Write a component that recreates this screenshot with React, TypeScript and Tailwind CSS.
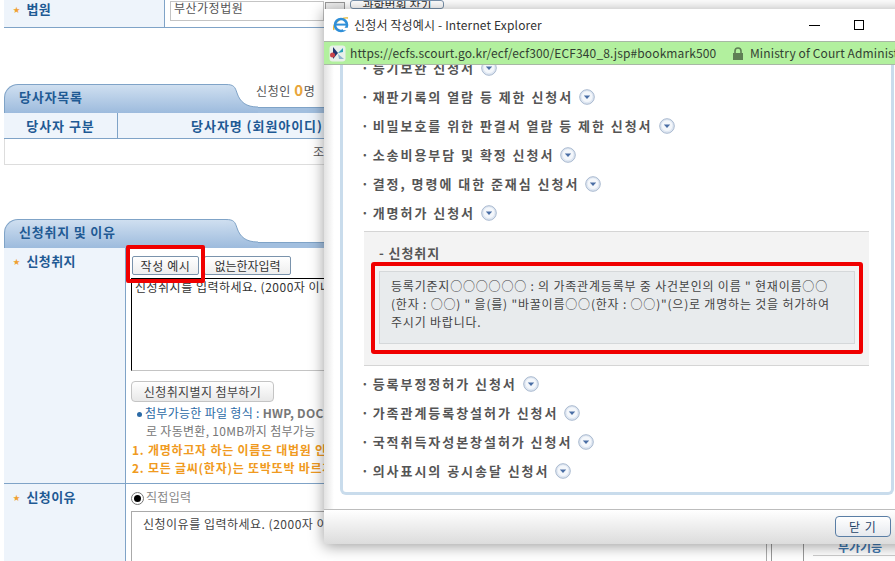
const FONT = "font-['Noto_Sans_CJK_KR','Noto_Sans',sans-serif]"

function Star() {
  return <span className="mr-[6px] inline-block align-[2px] text-[7px] leading-none text-[#f0a030]">★</span>
}

function SectionTab({ title, children }: { title: string; children?: React.ReactNode }) {
  return (
    <div className="flex h-[29px]">
      <div className="flex w-[222px] items-center rounded-tl-[14px] border-l border-t border-[#7fa3c7] bg-gradient-to-b from-[#cfdff0] to-[#9dbbdd] pb-[4px] pl-[14px] text-[13px] font-bold tracking-[0.8px] text-[#1f5a94]">
        {title}
      </div>
      <svg width="32" height="29" viewBox="0 0 32 29" className="shrink-0">
        <defs>
          <linearGradient id="tabfill" x1="0" y1="0" x2="0" y2="1">
            <stop offset="0" stopColor="#cfdff0" />
            <stop offset="1" stopColor="#9dbbdd" />
          </linearGradient>
        </defs>
        <path d="M0 0.5 C8 0.5 9 3 11 9 C14 18 20 23 32 23 L32 29 L0 29 Z" fill="url(#tabfill)" />
        <path d="M0 0.5 C8 0.5 9 3 11 9 C14 18 20 23 32 23" fill="none" stroke="#7fa3c7" />
      </svg>
      <div className="relative flex flex-1 flex-col justify-end">
        {children}
        <div className="h-[6px] border-t border-[#7fa3c7] bg-[#a2bfdf]" />
      </div>
    </div>
  )
}

function ExpandIcon() {
  return (
    <svg width="16" height="16" viewBox="0 0 16 16" className="ml-[6px] shrink-0">
      <circle cx="8" cy="8" r="7.3" fill="#dfe7f2" stroke="#a9b9cf" />
      <circle cx="8" cy="7.6" r="5.4" fill="#f4f7fb" />
      <path d="M4.8 6.6 H11.2 L8 10 Z" fill="#4a6ea5" />
    </svg>
  )
}

function FormItem({ label }: { label: string }) {
  return (
    <div className="flex h-[29px] items-center pl-[18px] text-[13px] font-bold tracking-[1.95px] text-[#555555]">
      <span className="mr-[4px] tracking-normal">·</span>
      <span>{label}</span>
      <ExpandIcon />
    </div>
  )
}

function IeIcon() {
  return (
    <svg width="18" height="18" viewBox="0 0 18 18" className="shrink-0">
      <path d="M2 14 C0 8 8 1 16 2" fill="none" stroke="#e8b93a" strokeWidth="1.4" />
      <circle cx="9" cy="9" r="6" fill="none" stroke="#2f8fd8" strokeWidth="2.6" />
      <path d="M4 8.6 H14" stroke="#2f8fd8" strokeWidth="2" />
      <path d="M11 13 H16" stroke="#ffffff" strokeWidth="2.4" />
    </svg>
  )
}

function SiteIcon() {
  return (
    <svg width="17" height="17" viewBox="0 0 17 17" className="shrink-0">
      <rect x="0.5" y="0.5" width="16" height="16" rx="3" fill="#e8f0ea" />
      <path d="M4 2 L9 8 L4 14 Z" fill="#20356f" />
      <circle cx="3.5" cy="10" r="2.5" fill="#c8434a" />
      <path d="M9 8 L14 3 L14 7 Z" fill="#2a9fb8" />
      <path d="M9 9 L15 14 L10 14 Z" fill="#8fb4cf" />
    </svg>
  )
}

function LockIcon() {
  return (
    <svg width="12" height="13" viewBox="0 0 12 13" className="shrink-0">
      <path d="M3 6 V4 a3 3 0 0 1 6 0 V6" fill="none" stroke="#5f7f55" strokeWidth="1.6" />
      <rect x="1" y="6" width="10" height="7" fill="#5f7f55" />
    </svg>
  )
}

const itemsAbove = [
  '등기보완 신청서',
  '재판기록의 열람 등 제한 신청서',
  '비밀보호를 위한 판결서 열람 등 제한 신청서',
  '소송비용부담 및 확정 신청서',
  '결정, 명령에 대한 준재심 신청서',
  '개명허가 신청서',
]

const itemsBelow = [
  '등록부정정허가 신청서',
  '가족관계등록창설허가 신청서',
  '국적취득자성본창설허가 신청서',
  '의사표시의 공시송달 신청서',
]

function Popup() {
  return (
    <div className="absolute left-[324px] top-[9px] flex h-[535px] w-[620px] flex-col bg-white shadow-[0_2px_14px_rgba(0,0,0,0.4)]">
      <div className="flex h-[32px] shrink-0 items-center pl-[8px]">
        <IeIcon />
        <span className="ml-[4px] text-[12px] tracking-[0.15px] text-[#333333]">신청서 작성예시 - Internet Explorer</span>
        <span className="ml-[267px] h-px w-[11px] bg-black" />
        <span className="ml-[34px] h-[10px] w-[10px] border border-black" />
      </div>
      <div className="flex h-[24px] shrink-0 items-center border-y border-[#a8b8a4] bg-[#b2f09e] pl-[5px] text-[12px] tracking-[0.12px] text-[#333f33]">
        <SiteIcon />
        <span className="ml-[4px] w-[382px] shrink-0">https://ecfs.scourt.go.kr/ecf/ecf300/ECF340_8.jsp#bookmark500</span>
        <LockIcon />
        <span className="ml-[6px] whitespace-nowrap">Ministry of Court Administration</span>
      </div>
      <div className="min-h-0 flex-1 bg-[linear-gradient(90deg,#e2e2e2,#ffffff_10px)] pl-[16px] pt-0">
        <div className="h-[430px] w-[554px] overflow-hidden rounded-b-[6px] border-x-[3px] border-b-[3px] border-[#c9dcec] bg-white">
          <div className="-mt-[12px]">
            {itemsAbove.map((item) => (
              <FormItem key={item} label={item} />
            ))}
            <div className="ml-[21px] mt-[4px] h-[135px] w-[505px] border-y border-[#d5d5d5] bg-[#f3f3f3] pl-[15px] pt-[11px]">
              <div className="text-[13px] font-bold tracking-[0.9px] text-[#555555]">- 신청취지</div>
              <div className="mt-[8px] h-[73px] w-[476px] border border-[#d5d8da] bg-[#e8ebed] pl-[11px] pt-[5px] text-[12px] leading-[18px] tracking-[0.8px] text-[#444444]">
                <div className="whitespace-nowrap">등록기준지○○○○○○ : 의 가족관계등록부 중 사건본인의 이름 " 현재이름○○</div>
                <div className="whitespace-nowrap">(한자 : ○○) " 을(를) "바꿀이름○○(한자 : ○○)"(으)로 개명하는 것을 허가하여</div>
                <div className="whitespace-nowrap">주시기 바랍니다.</div>
              </div>
            </div>
            <div className="mt-[3px]">
              {itemsBelow.map((item) => (
                <FormItem key={item} label={item} />
              ))}
            </div>
          </div>
        </div>
      </div>
      <div className="flex h-[35px] shrink-0 items-start border-t border-[#bdbdbd] bg-gradient-to-b from-white to-[#dcdcdc] pl-[511px] pt-[6px]">
        <button className="h-[21px] w-[56px] rounded-[4px] border border-[#5a7ea5] bg-gradient-to-b from-white to-[#e6e9ee] text-[12px] leading-none tracking-[1px] text-[#1f4468]">
          닫 기
        </button>
      </div>
    </div>
  )
}

const BTN =
  'h-[19px] rounded-[2px] border border-[#7a93ac] bg-gradient-to-b from-white to-[#eeeeee] text-[12px] leading-none text-[#333333]'

export default function App() {
  return (
    <div className={`${FONT} relative flex h-[561px] w-[895px] overflow-hidden bg-white pl-1`}>
      <div className="w-[768px] shrink-0">
        <div className="flex h-[28px] border-b border-[#7fa3c7]">
          <div className="w-[161px] border-r border-[#7fa3c7] bg-[#eef4fb] pl-[9px] pt-px text-[13px] font-bold leading-[16px] tracking-[0.4px] text-[#1f5a94]">
            <Star />
            법원
          </div>
          <div className="ml-[5px] mt-px h-[20px] w-[154px] border border-[#c4c4c4] pl-[3px] text-[12px] leading-[12px] tracking-[0.5px] text-[#555555]">
            부산가정법원
          </div>
          <div className="ml-px mt-[2px] h-[8px] w-[20px] border border-[#999999] bg-[#eeeeee]" />
          <div className="ml-[5px] mt-0 h-[9px] w-[94px] overflow-hidden rounded-[3px] border border-[#7a93ac] text-center text-[12px] leading-[9px] text-[#333333]">
            관할법원 찾기
          </div>
        </div>

        <div className="mt-[56px]">
          <SectionTab title="당사자목록">
            <div className="absolute left-[-2px] top-[-1px] whitespace-nowrap text-[12px] leading-[14px] tracking-[0.6px] text-[#555555]">
              신청인 <span className="text-[15px] font-bold text-[#e8a53a]">0</span>명
            </div>
          </SectionTab>
          <div className="flex h-[26px] border-b border-[#7fa3c7] bg-[#eef4fb] text-[13px] font-bold tracking-[0.95px] text-[#1f5a94]">
            <div className="flex w-[114px] items-center justify-center border-r border-[#7fa3c7]">당사자 구분</div>
            <div className="flex w-[278px] items-center justify-center">당사자명 (회원아이디)</div>
          </div>
          <div className="flex h-[26px] items-center border-x border-b border-[#dddddd] pl-[308px] text-[12px] text-[#555555]">
            조회된 당사자가 없습니다.
          </div>
        </div>

        <div className="mt-[54px]">
          <SectionTab title="신청취지 및 이유" />
          <div className="flex h-[236px] border-b border-[#7fa3c7]">
            <div className="w-[122px] shrink-0 border-r border-[#7fa3c7] bg-[#eef4fb] pl-[9px] pt-[3px] text-[13px] font-bold tracking-[0.4px] text-[#1f5a94]">
              <Star />
              신청취지
            </div>
            <div className="flex-1 pl-[5px] pt-[8px]">
              <div className="flex gap-[5px] pl-px">
                <button className={`${BTN} w-[67px] tracking-[0.6px]`}>작성 예시</button>
                <button className={`${BTN} w-[87px]`}>없는한자입력</button>
              </div>
              <div className="mt-[3px] h-[93px] w-[636px] border-x border-y border-black border-b-[#c4c4c4] pl-[3px] text-[12px] leading-[15px] tracking-[0.5px] text-[#333333]">
                신청취지를 입력하세요. (2000자 이내)
              </div>
              <button className="mt-[10px] h-[21px] w-[143px] rounded-[4px] border border-[#c4c4c4] bg-gradient-to-b from-white to-[#e8e8e8] text-[12px] leading-none tracking-[0.4px] text-[#444444]">
                신청취지별지 첨부하기
              </button>
              <div className="mt-[2px] whitespace-nowrap pl-[14px] text-[12px] leading-[18px] tracking-[0.3px] text-[#2b6aa6]">
                <span className="mr-[3px] inline-block h-[5px] w-[5px] -translate-x-[8px] rounded-full bg-[#2b6aa6] align-middle" />
                <span className="-ml-[8px]">첨부가능한 파일 형식 : </span>
                <span className="font-bold text-[#777777]">HWP, DOC, PDF</span>
              </div>
              <div className="whitespace-nowrap pl-[15px] text-[12px] leading-[18px] tracking-[0.3px] text-[#777777]">로 자동변환, 10MB까지 첨부가능</div>
              <div className="whitespace-nowrap pl-px text-[12px] font-bold leading-[19px] tracking-[0.75px] text-[#f09a20]">
                1. 개명하고자 하는 이름은 대법원 인명용 한자
              </div>
              <div className="whitespace-nowrap pl-px text-[12px] font-bold leading-[18px] tracking-[0.75px] text-[#f09a20]">
                2. 모든 글씨(한자)는 또박또박 바르게
              </div>
            </div>
          </div>
          <div className="flex h-[77px] border-r border-[#999999]">
            <div className="w-[122px] shrink-0 border-r border-[#7fa3c7] bg-[#eef4fb] pl-[9px] pt-[3px] text-[13px] font-bold tracking-[0.4px] text-[#1f5a94]">
              <Star />
              신청이유
            </div>
            <div className="flex-1 pl-[5px] pt-[3px]">
              <div className="flex h-[19px] items-center text-[12px] tracking-[0.3px] text-[#888888]">
                <span className="mr-[2px] mt-[3px] flex h-[13px] w-[13px] items-center justify-center rounded-full border border-[#777777]">
                  <span className="h-[7px] w-[7px] rounded-full bg-black" />
                </span>
                직접입력
              </div>
              <div className="mt-[5px] h-[60px] w-[636px] border border-[#aaaaaa] pl-[11px] pt-[3px] text-[12px] tracking-[0.5px] text-[#444444]">
                신청이유를 입력하세요. (2000자 이내)
              </div>
            </div>
          </div>
        </div>
      </div>

      <div className="ml-[31px] flex h-[20px] flex-1 flex-col self-end border-l border-[#999999] pl-[9px]">
        <div className="h-[15px] border-b border-[#cccccc] pl-[25px] text-[12px] font-bold leading-[11px] text-[#3f76ad]">부가기능</div>
      </div>

      <div className="absolute left-[126px] top-[245px] h-[38px] w-[79px] rounded-[2px] border-[4px] border-[#f00000]" />
      <Popup />
      <div className="absolute left-[371px] top-[262px] h-[92px] w-[492px] rounded-[3px] border-[4px] border-[#f00000]" />
    </div>
  )
}
